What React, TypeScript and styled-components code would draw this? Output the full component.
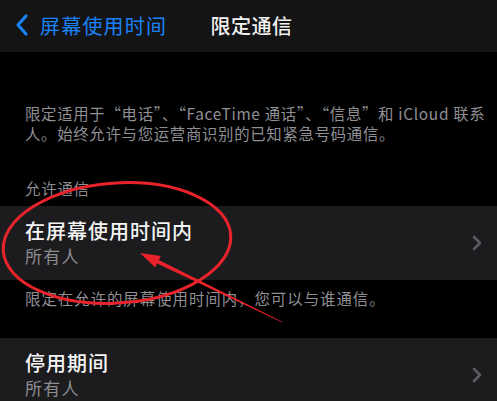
import React, { FC } from "react";
import styled, { createGlobalStyle } from "styled-components";

const GlobalStyle = createGlobalStyle`
  html, body {
    margin: 0;
    padding: 0;
    background: #000;
  }
  body {
    font-family: "Noto Sans CJK SC", "Noto Sans", sans-serif;
    -webkit-font-smoothing: antialiased;
  }
`;

interface RowProps {
  title: string;
  value: string;
}

const Row: FC<RowProps> = ({ title, value }) => (
  <Cell>
    <CellText>
      <CellTitle>{title}</CellTitle>
      <CellValue>{value}</CellValue>
    </CellText>
    <Chevron viewBox="0 0 10 16">
      <path d="M2 2l6 6-6 6" />
    </Chevron>
  </Cell>
);

// red circle + arrow drawn over the screenshot
const Markup: FC = () => {
  const tip = [140, 253];
  const tail = [282, 322];
  const dx = tail[0] - tip[0];
  const dy = tail[1] - tip[1];
  const len = Math.hypot(dx, dy);
  const u = [dx / len, dy / len];
  const p = [-u[1], u[0]];
  const base = [tip[0] + 20 * u[0], tip[1] + 20 * u[1]];
  const pt = (c: number[], k: number) => `${c[0] + k * p[0]},${c[1] + k * p[1]}`;
  return (
    <Overlay viewBox="0 0 497 401">
      <ellipse
        cx="117"
        cy="243"
        rx="114"
        ry="60"
        transform="rotate(-4 117 243)"
        fill="none"
        stroke="#e8232b"
        strokeWidth="3"
      />
      <polygon
        fill="#e8232b"
        points={`${tip[0]},${tip[1]} ${pt(base, 6.5)} ${pt(base, 2)} ${pt(tail, 0.4)} ${pt(tail, -0.4)} ${pt(base, -2)} ${pt(base, -6.5)}`}
      />
    </Overlay>
  );
};

export default function App() {
  return (
    <Page>
      <GlobalStyle />
      <NavBar>
        <Back>
          <BackIcon viewBox="0 0 16 24">
            <path d="M12 3L4 12l8 9" />
          </BackIcon>
          屏幕使用时间
        </Back>
        <Title>限定通信</Title>
        <span />
      </NavBar>
      <Note>
        限定适用于“电话”、“FaceTime 通话”、“信息”和 iCloud 联系
        <br />
        人。始终允许与您运营商识别的已知紧急号码通信。
      </Note>
      <SectionHeader>允许通信</SectionHeader>
      <Row title="在屏幕使用时间内" value="所有人" />
      <Footer>限定在允许的屏幕使用时间内，您可以与谁通信。</Footer>
      <Row title="停用期间" value="所有人" />
      <Markup />
    </Page>
  );
}

const Page = styled.div`
  position: relative;
  width: 497px;
  height: 401px;
  overflow: hidden;
  background: #000;
`;

const NavBar = styled.div`
  height: 52px;
  background: #141414;
  display: grid;
  grid-template-columns: 1fr auto 1fr;
  align-items: center;
  padding-bottom: 2px;
  box-sizing: border-box;
`;

const Back = styled.div`
  display: flex;
  align-items: center;
  gap: 10px;
  padding-left: 14px;
  color: #1a82f7;
  font-size: 20px;
  letter-spacing: 1.2px;
  white-space: nowrap;
`;

const BackIcon = styled.svg`
  width: 16px;
  height: 24px;
  fill: none;
  stroke: #1a82f7;
  stroke-width: 3.2;
  stroke-linecap: round;
  stroke-linejoin: round;
`;

const Title = styled.div`
  color: #f2f2f2;
  font-size: 20px;
  font-weight: 500;
  letter-spacing: 0.5px;
  padding-left: 6px;
`;

const Note = styled.div`
  margin: 51px 0 0;
  padding: 0 25px;
  color: #8f8f94;
  font-size: 15.4px;
  line-height: 20px;
  letter-spacing: 0.7px;
  white-space: nowrap;
`;

const SectionHeader = styled.div`
  margin-top: 35px;
  padding: 0 25px;
  color: #8a8a8f;
  font-size: 15.4px;
  line-height: 20px;
  letter-spacing: 0.8px;
`;

const Cell = styled.div`
  margin-top: 8px;
  height: 74px;
  background: #1c1c1e;
  display: flex;
  align-items: center;
  padding: 0 15px 0 25px;
  box-sizing: border-box;
`;

const CellText = styled.div`
  flex: 1;
  display: flex;
  flex-direction: column;
`;

const CellTitle = styled.div`
  color: #f4f4f4;
  font-size: 20px;
  font-weight: 500;
  line-height: 26px;
  letter-spacing: 1px;
`;

const CellValue = styled.div`
  color: #8c8c91;
  font-size: 17px;
  line-height: 24px;
  letter-spacing: 1.2px;
`;

const Chevron = styled.svg`
  width: 10px;
  height: 16px;
  fill: none;
  stroke: #5c5c60;
  stroke-width: 2.6;
  stroke-linecap: round;
  stroke-linejoin: round;
`;

const Footer = styled.div`
  padding: 0 25px;
  margin-top: 8px;
  margin-bottom: 30px;
  color: #8f8f94;
  font-size: 15.4px;
  line-height: 20px;
  letter-spacing: 1px;
`;

const Overlay = styled.svg`
  position: absolute;
  left: 0;
  top: 0;
  width: 497px;
  height: 401px;
  pointer-events: none;
`;
